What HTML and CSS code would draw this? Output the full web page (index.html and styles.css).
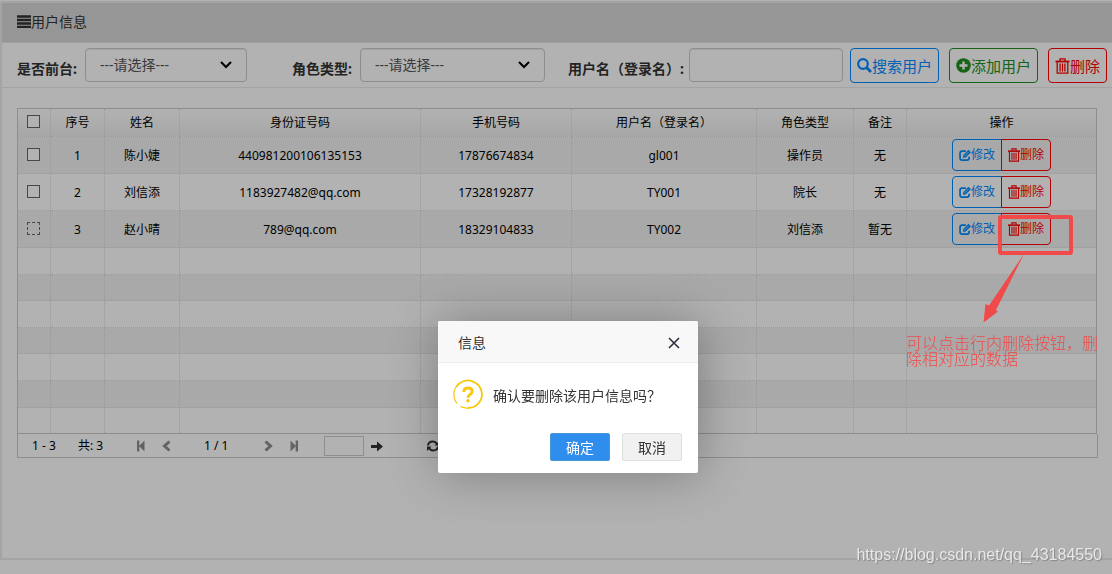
FILE: index.html
```html
<!DOCTYPE html>
<html lang="zh-CN">
<head>
<meta charset="utf-8">
<title>用户信息</title>
<link rel="stylesheet" href="styles.css">
</head>
<body>
<svg class="defs" aria-hidden="true">
  <symbol id="i-trash" viewBox="0 0 14 16"><path d="M0 3.500h14" stroke="currentColor" stroke-width="1.800"/><path d="M4.500 3V.8h5V3M1.700 3.500v11.700h10.600V3.500M4.600 5.500v8M7 5.500v8M9.400 5.500v8" fill="none" stroke="currentColor" stroke-width="1.300"/></symbol>
  <symbol id="i-edit" viewBox="0 0 14 14"><path d="M8 2.500H3.700Q1.200 2.500 1.200 5v5.500Q1.200 13 3.700 13h5.600Q11.800 13 11.800 10.500V9" fill="none" stroke="currentColor" stroke-width="2"/><path d="M4.500 10.300l.6-3.300L11 1l3 2.800-6.200 6.200z" fill="currentColor"/><path d="M6.300 8.300l5-5" stroke="#fff" stroke-width=".7"/></symbol>
  <symbol id="i-chev" viewBox="0 0 12 8"><path d="M1 1l5 5 5-5" fill="none" stroke="#000" stroke-width="2"/></symbol>
</svg>

<main class="panel">
  <header class="panel-head">
    <svg class="menu" viewBox="0 0 14 13"><path d="M0 1.500h14M0 5h14M0 8.500h14M0 12h14" stroke="currentColor" stroke-width="2.300"/></svg>
    <h1>用户信息</h1>
  </header>

  <form class="filters">
    <div class="field field-front">
      <label for="front">是否前台:</label>
      <span class="pick"><select id="front"><option>---请选择---</option></select><svg><use href="#i-chev"/></svg></span>
    </div>
    <div class="field field-role">
      <label for="role">角色类型:</label>
      <span class="pick"><select id="role"><option>---请选择---</option></select><svg><use href="#i-chev"/></svg></span>
    </div>
    <div class="field field-name">
      <label for="uname">用户名（登录名）:</label>
      <input id="uname" type="text">
    </div>
    <div class="actions">
      <button type="button" class="btn blue"><svg viewBox="0 0 15 15"><circle cx="6" cy="6" r="4.800" fill="none" stroke="currentColor" stroke-width="2.200"/><path d="M9.500 9.500l4.500 4.500" stroke="currentColor" stroke-width="2.800"/></svg>搜索用户</button>
      <button type="button" class="btn green"><svg viewBox="0 0 15 15"><circle cx="7.500" cy="7.500" r="7.300" fill="currentColor"/><path d="M7.500 3.500v8M3.500 7.500h8" stroke="#fff" stroke-width="2.400"/></svg>添加用户</button>
      <button type="button" class="btn red"><svg class="trash"><use href="#i-trash"/></svg>删除</button>
    </div>
  </form>

  <section class="grid">
    <table>
      <colgroup><col class="c-check"><col class="c-no"><col class="c-name"><col class="c-id"><col class="c-tel"><col class="c-login"><col class="c-role"><col class="c-note"><col></colgroup>
      <thead>
        <tr><th><input type="checkbox" aria-label="全选"></th><th>序号</th><th>姓名</th><th>身份证号码</th><th>手机号码</th><th>用户名（登录名）</th><th>角色类型</th><th>备注</th><th>操作</th></tr>
      </thead>
      <tbody>
        <tr class="data"><td><input type="checkbox" aria-label="选择 1"></td><td>1</td><td>陈小婕</td><td>440981200106135153</td><td>17876674834</td><td>gl001</td><td>操作员</td><td>无</td><td><span class="pair"><button type="button" class="mini blue"><svg><use href="#i-edit"/></svg>修改</button><button type="button" class="mini red"><svg class="trash"><use href="#i-trash"/></svg>删除</button></span></td></tr>
        <tr class="data"><td><input type="checkbox" aria-label="选择 2"></td><td>2</td><td>刘信添</td><td>1183927482@qq.com</td><td>17328192877</td><td>TY001</td><td>院长</td><td>无</td><td><span class="pair"><button type="button" class="mini blue"><svg><use href="#i-edit"/></svg>修改</button><button type="button" class="mini red"><svg class="trash"><use href="#i-trash"/></svg>删除</button></span></td></tr>
        <tr class="data"><td><input type="checkbox" class="focused" aria-label="选择 3"></td><td>3</td><td>赵小晴</td><td>789@qq.com</td><td>18329104833</td><td>TY002</td><td>刘信添</td><td>暂无</td><td><span class="pair"><button type="button" class="mini blue"><svg><use href="#i-edit"/></svg>修改</button><button type="button" class="mini red"><svg class="trash"><use href="#i-trash"/></svg>删除</button></span></td></tr>
        <tr><td></td><td></td><td></td><td></td><td></td><td></td><td></td><td></td><td></td></tr>
        <tr><td></td><td></td><td></td><td></td><td></td><td></td><td></td><td></td><td></td></tr>
        <tr><td></td><td></td><td></td><td></td><td></td><td></td><td></td><td></td><td></td></tr>
        <tr><td></td><td></td><td></td><td></td><td></td><td></td><td></td><td></td><td></td></tr>
        <tr><td></td><td></td><td></td><td></td><td></td><td></td><td></td><td></td><td></td></tr>
        <tr><td></td><td></td><td></td><td></td><td></td><td></td><td></td><td></td><td></td></tr>
        <tr><td></td><td></td><td></td><td></td><td></td><td></td><td></td><td></td><td></td></tr>
      </tbody>
    </table>
    <nav class="pager">
      <span class="range">1 - 3</span>
      <span class="total">共: 3</span>
      <button type="button" class="nav" aria-label="首页"><svg viewBox="0 0 10 12"><path d="M1 .5h2.300v11H1zM8.500 .5v11L3 6z" fill="currentColor"/></svg></button>
      <button type="button" class="nav" aria-label="上一页"><svg viewBox="0 0 10 12"><path d="M7.500 1.500L2.500 6l5 4.500" fill="none" stroke="currentColor" stroke-width="3"/></svg></button>
      <span class="page">1 / 1</span>
      <button type="button" class="nav" aria-label="下一页"><svg viewBox="0 0 10 12"><path d="M1.500 1.500L6.500 6l-5 4.500" fill="none" stroke="currentColor" stroke-width="3"/></svg></button>
      <button type="button" class="nav" aria-label="末页"><svg viewBox="0 0 10 12"><path d="M5.700 .5H8v11H5.700zM.5 .5v11L6 6z" fill="currentColor"/></svg></button>
      <input type="text" aria-label="页码">
      <button type="button" class="nav go" aria-label="跳转"><svg viewBox="0 0 12 12"><path d="M0 5h6V1.500L12 6.500 6 11.500V8H0z" fill="currentColor"/></svg></button>
      <button type="button" class="nav refresh" aria-label="刷新"><svg viewBox="0 0 12 12"><path d="M1 5.500Q1.500 1.500 6 1.500q2.500 0 4 2.500M11 6.500Q10.500 10.500 6 10.500q-2.500 0-4-2.500" fill="none" stroke="currentColor" stroke-width="2"/><path d="M12 1v4.500H7.500zM0 11V6.500h4.500z" fill="currentColor"/></svg></button>
    </nav>
  </section>
</main>

<div class="shade"></div>

<section class="dialog" role="dialog" aria-labelledby="dlg-title">
  <header class="dialog-head">
    <h2 id="dlg-title">信息</h2>
    <button type="button" class="close" aria-label="关闭"><svg viewBox="0 0 12 12"><path d="M1 1l10 10M11 1L1 11" stroke="currentColor" stroke-width="1.600"/></svg></button>
  </header>
  <div class="dialog-body">
    <svg class="ask" viewBox="0 0 30 30" fill="none" stroke="#f8c60a"><path d="M4 24.500A14.300 14.300 0 0 1 4 6.500" stroke-width="1.100"/><path d="M3.500 7.500A14 14 0 0 1 29 15 14 14 0 0 1 15 29" stroke-width="1.800"/><path d="M16 29Q11 29.400 7.500 27.500" stroke-width="1.200"/><path d="M10.800 13Q10.800 9 15 9t4.200 3.400q0 1.800-2.200 3.100-2 1.200-2 3.200" stroke-width="2.800"/><circle cx="15" cy="21.700" r="1.700" fill="#f8c60a" stroke="none"/></svg>
    <p>确认要删除该用户信息吗？</p>
  </div>
  <footer class="dialog-foot">
    <button type="button" class="ok">确定</button>
    <button type="button" class="cancel">取消</button>
  </footer>
</section>

<svg class="mark" viewBox="0 0 93 110" aria-hidden="true">
  <rect x="20" y="4" width="71" height="36" rx="1" fill="none" stroke="#f04a4a" stroke-width="4"/>
  <path d="M44 41L9 92.500 5.500 91 3.500 109.500 18 98.500 16 97z" fill="#f04a4a"/>
</svg>
<p class="note">可以点击行内删除按钮，删除相对应的数据</p>
<p class="credit">https://blog.csdn.net/qq_43184550</p>
</body>
</html>
```
FILE: styles.css
```css
* { box-sizing: border-box; }
body {
  margin: 0;
  background: #fff;
  color: #333;
  font: 14px/20px "Noto Sans", "Noto Sans CJK SC", sans-serif;
}
h1, h2, p { margin: 0; font-size: 14px; font-weight: 400; }
button, input, select { font: inherit; color: inherit; margin: 0; }
button { padding: 0; background: none; border: 0; }
.defs { position: absolute; width: 0; height: 0; }

.panel {
  margin-top: 1px;
  min-height: calc(100vh - 15px);
  border: 2px solid #ebebeb;
  border-right: 0;
}
.panel-head {
  display: flex;
  align-items: center;
  height: 39px;
  padding: 0 0 2px 15px;
  background: #d7d7d7;
}
.menu { width: 14px; height: 13px; }

.filters {
  display: flex;
  align-items: flex-start;
  height: 46px;
  padding: 5px 5px 0 15px;
  border-top: 1px solid #e4e4e4;
  border-bottom: 1px solid #ebebeb;
}
.field { display: flex; min-width: 0; }
.field label { padding-top: 11px; font-weight: 700; white-space: nowrap; }
.field-front { flex: 230 1 0; gap: 8px; }
.field-role { flex: 253 1 0; gap: 8px; margin-left: 45px; }
.field-name { flex: 275 1 0; gap: 5px; margin-left: 23px; }
.field input, .pick { flex: 1; min-width: 0; }
.field input, .pick select {
  height: 34px;
  border: 1px solid #ccc;
  border-radius: 4px;
  background: #fff;
  box-shadow: inset 0 1px 1px rgba(0, 0, 0, .08);
}
.pick { position: relative; }
.pick select { width: 100%; padding: 0 14px; color: #555; appearance: none; }
.pick svg { position: absolute; right: 15px; top: 13px; width: 12px; height: 8px; pointer-events: none; }

.actions { display: flex; gap: 10px; margin-left: 7px; }
.btn {
  display: flex;
  align-items: center;
  height: 35px;
  padding: 0 6px;
  border: 1px solid;
  border-radius: 4px;
  font-size: 15px;
  white-space: nowrap;
}
.btn svg { width: 15px; height: 15px; }
.btn .trash { height: 16px; }
.blue { color: #008cff; }
.green { color: #229022; }
.red { color: #f00; }

.grid { padding: 20px 14px 0 15px; color: #000; font-size: 12px; }
table {
  width: calc(100% - 1px);
  table-layout: fixed;
  border: 1px solid #ccc;
  border-collapse: separate;
  border-spacing: 0;
}
.c-check { width: 33px; }
.c-no { width: 54px; }
.c-name { width: 75px; }
.c-id { width: 241px; }
.c-tel { width: 151px; }
.c-login { width: 185px; }
.c-role { width: 97px; }
.c-note { width: 53px; }
th, td {
  padding: 0;
  border: 0 dotted #dcdcdc;
  border-width: 0 1px 1px 0;
  font-weight: 400;
  text-align: center;
}
th:last-child, td:last-child { border-right: 0; }
tbody tr:last-child td { border-bottom: 0; }
th { height: 28px; background: linear-gradient(#fff, #f0f0f0); }
td { height: 27px; }
tr:nth-child(5) td, tr:nth-child(7) td, tr:nth-child(10) td { height: 26px; }
tbody tr:last-child td { height: 25px; }
tr:nth-child(1) td, tr:nth-child(3) td { background: #f3f3f3; }
tr:nth-child(5) td, tr:nth-child(7) td, tr:nth-child(9) td { background: #f3f3f3; }
.data td { height: 37px; padding-top: 1px; }
.data td:first-child, .data td:last-child { padding-top: 0; }
input[type="checkbox"] {
  display: block;
  width: 13px;
  height: 13px;
  margin: 0 0 2px 9px;
  appearance: none;
  border: 1px solid #666;
  background: #fff;
}
input.focused[type="checkbox"] { border-style: dashed; background: none; }
.pair { display: inline-flex; vertical-align: middle; }
.mini {
  display: flex;
  align-items: center;
  height: 32px;
  padding: 0 6px;
  border: 1px solid;
  border-radius: 4px 0 0 4px;
}
.mini + .mini { margin-left: -1px; border-radius: 0 4px 4px 0; }
.mini svg { width: 12px; height: 12px; }
.mini .trash { height: 14px; }

.pager {
  display: flex;
  align-items: center;
  height: 24px;
  padding-left: 14px;
  border: 1px solid #ccc;
  border-top: 0;
}
.range { width: 46px; }
.total { width: 58px; }
.nav { width: 26px; height: 12px; color: #8f8f8f; }
.nav svg { display: block; width: 10px; height: 12px; }
.page { width: 72px; padding-left: 16px; }
.page + .nav { margin-left: 4px; }
.pager input { width: 40px; height: 20px; margin-left: 8px; border: 1px solid #ccc; background: #fff; }
.nav.go, .nav.refresh { color: #333; }
.nav.go { margin-left: 7px; }
.nav.refresh { margin-left: 30px; }
.go svg, .refresh svg { width: 12px; }

.shade { position: fixed; inset: 0; background: rgba(0, 0, 0, .3); }

.dialog {
  position: absolute;
  top: 321px;
  left: calc(50% - 118px);
  width: 260px;
  border-radius: 2px;
  background: #fff;
  box-shadow: 1px 1px 50px rgba(0, 0, 0, .3);
}
.dialog-head {
  display: flex;
  align-items: center;
  justify-content: space-between;
  height: 42px;
  padding: 2px 18px 0 20px;
  border-bottom: 1px solid #eee;
  border-radius: 2px 2px 0 0;
  background: #f8f8f8;
}
.close { width: 12px; height: 12px; color: #2e2d3c; }
.close svg { display: block; }
.dialog-body { display: flex; gap: 10px; padding: 16px 15px 24px; }
.dialog-body p { padding-top: 7px; white-space: nowrap; }
.ask { flex: none; width: 30px; height: 30px; }
.dialog-foot { display: flex; justify-content: flex-end; gap: 12px; padding: 0 16px 12px; }
.dialog-foot button { width: 60px; height: 28px; padding-top: 2px; border: 1px solid #dedede; border-radius: 2px; background: #f1f1f1; }
.dialog-foot .ok { border-color: #4898d5; background: #2e8ded; color: #fff; }

.mark { position: absolute; top: 213px; right: 39px; width: 93px; height: 110px; }
.note {
  position: absolute;
  top: 335px;
  right: 14px;
  width: 192px;
  color: #f04a4a;
  font-size: 16px;
  font-weight: 300;
  line-height: 16px;
  word-break: break-all;
}
.credit {
  position: absolute;
  top: 545px;
  right: 10px;
  color: #e8e8e8;
  font: 16px/20px "Liberation Sans", sans-serif;
  text-shadow: 1px 1px 1px #888;
}
```
